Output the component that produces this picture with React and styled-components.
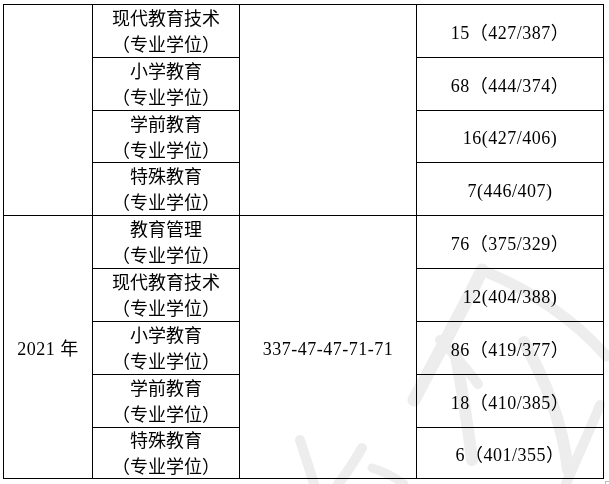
import React from "react";
import styled, { createGlobalStyle } from "styled-components";

const GlobalStyle = createGlobalStyle`
  html, body {
    margin: 0;
    padding: 0;
    background: #fff;
  }
  body {
    font-family: "Liberation Serif", "Noto Sans CJK SC", serif;
    color: #000;
  }
`;

const groups = [
  {
    year: "",
    score: "",
    rows: [
      { major: "现代教育技术", count: "15（427/387）" },
      { major: "小学教育", count: "68（444/374）" },
      { major: "学前教育", count: "16(427/406)" },
      { major: "特殊教育", count: "7(446/407)" },
    ],
  },
  {
    year: "2021 年",
    score: "337-47-47-71-71",
    rows: [
      { major: "教育管理", count: "76（375/329）" },
      { major: "现代教育技术", count: "12(404/388)" },
      { major: "小学教育", count: "86（419/377）" },
      { major: "学前教育", count: "18（410/385）" },
      { major: "特殊教育", count: "6（401/355）" },
    ],
  },
];

const Page = styled.div`
  position: relative;
  width: 609px;
  height: 484px;
  overflow: hidden;
  padding: 4px 0 0 3px;
  box-sizing: border-box;
`;

const Table = styled.div`
  display: grid;
  grid-template-columns: 89px 147px 177px 187px;
  grid-template-rows: 53px 53px 52px 53px 53px 53px 53px 53px 51px;
  width: max-content;
  border-top: 1px solid #000;
  border-left: 1px solid #000;
  position: relative;
  z-index: 1;
`;

const Cell = styled.div`
  box-sizing: border-box;
  border-right: 1px solid #000;
  border-bottom: 1px solid #000;
  display: flex;
  flex-direction: column;
  align-items: center;
  justify-content: center;
  text-align: center;
  padding-top: ${(p) => (p.$numeric ? "3px" : "2px")};
  font-size: 18px;
  line-height: 26px;
  letter-spacing: ${(p) => (p.$numeric ? "0.5px" : "0")};
  grid-row: ${(p) => (p.$span ? `span ${p.$span}` : "auto")};
  white-space: nowrap;
`;

const Watermark = styled.svg`
  position: absolute;
  left: 0;
  top: 0;
  width: 609px;
  height: 484px;
  z-index: 2;
  pointer-events: none;
  mix-blend-mode: multiply;
`;

const Corner = styled.div`
  position: absolute;
  left: 605px;
  top: 481px;
  width: 4px;
  height: 3px;
  border-left: 1px solid #bbb;
  border-top: 1px solid #bbb;
`;

export default function App() {
  return (
    <Page>
      <GlobalStyle />
      <Table>
        {groups.map((g, gi) =>
          g.rows.map((r, ri) => (
            <React.Fragment key={`${gi}-${ri}`}>
              {ri === 0 && <Cell $span={g.rows.length} $numeric>{g.year}</Cell>}
              <Cell>
                <span>{r.major}</span>
                <span>（专业学位）</span>
              </Cell>
              {ri === 0 && (
                <Cell $span={g.rows.length} $numeric>
                  {g.score}
                </Cell>
              )}
              <Cell $numeric>{r.count}</Cell>
            </React.Fragment>
          ))
        )}
      </Table>
      <Watermark viewBox="0 0 609 484">
        <g fill="none" stroke="#ededed" strokeLinecap="round" strokeLinejoin="round">
          <path d="M482 270 C468 300 440 350 414 400" strokeWidth="13" />
          <path d="M486 272 C530 290 575 320 606 356" strokeWidth="11" />
          <path d="M440 340 C452 352 466 368 478 384" strokeWidth="10" />
          <path d="M455 350 C462 390 468 425 472 460" strokeWidth="12" />
          <path d="M524 342 C545 380 562 420 568 470" strokeWidth="12" />
          <path d="M600 405 C590 430 578 455 566 484" strokeWidth="10" />
          <path d="M300 440 C305 456 310 470 314 484" strokeWidth="10" />
          <path d="M362 448 C354 462 346 474 338 484" strokeWidth="10" />
          <path d="M372 468 C385 472 396 478 404 484" strokeWidth="9" />
        </g>
      </Watermark>
      <Corner />
    </Page>
  );
}
